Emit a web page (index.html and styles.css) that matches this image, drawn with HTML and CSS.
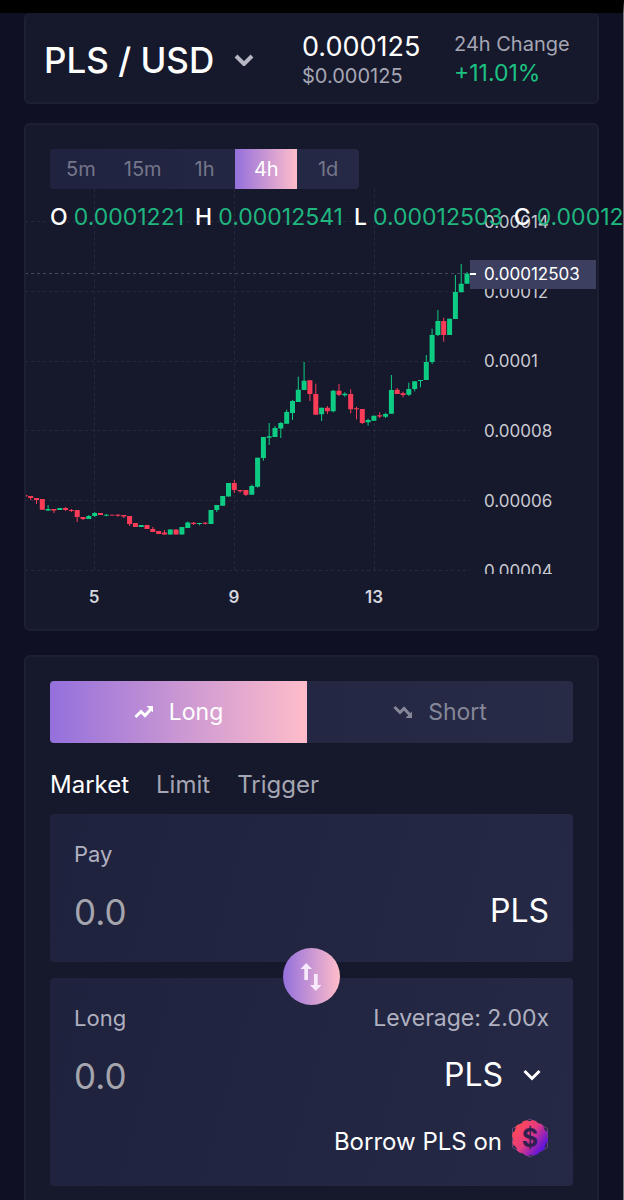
FILE: index.html
```html
<!DOCTYPE html>
<html lang="en">
<head>
<meta charset="utf-8">
<meta name="viewport" content="width=device-width, initial-scale=1">
<title>PLS / USD</title>
<link rel="stylesheet" href="styles.css">
</head>
<body>
<div class="app">
  <header class="card ticker">
    <button class="pair" type="button">
      <span>PLS / USD</span>
      <svg class="pair-caret" viewBox="0 0 20 12" aria-hidden="true"><path d="M2 2l8 8 8-8"/></svg>
    </button>
    <div class="quote">
      <div class="quote-main">0.000125</div>
      <div class="quote-sub">$0.000125</div>
    </div>
    <div class="change">
      <div class="change-label">24h Change</div>
      <div class="change-value">+11.01%</div>
    </div>
  </header>

  <main class="content">
    <section class="card chart-card">
      <div class="intervals">
        <button type="button">5m</button>
        <button type="button">15m</button>
        <button type="button">1h</button>
        <button type="button" class="active">4h</button>
        <button type="button">1d</button>
      </div>
      <div class="chart-wrap">
        <svg class="chart" viewBox="26 189 571 440" role="img" aria-label="PLS price chart">
          <defs><clipPath id="plot"><rect x="25" y="187" width="573" height="387"/></clipPath></defs>
          <g class="grid">
            <path d="M94.5 189V571M234.5 189V571M374.5 189V571"/>
            <path d="M25 221.5H470M25 291.5H470M25 361.5H470M25 430.5H470M25 500.5H470M25 570.5H470"/>
          </g>
          <path class="price-line" d="M25 273.5H470"/>
          <g id="candles"></g>
          <g class="y-labels" clip-path="url(#plot)">
            <text x="484" y="228">0.00014</text>
            <text x="484" y="298">0.00012</text>
            <text x="484" y="367">0.0001</text>
            <text x="484" y="437">0.00008</text>
            <text x="484" y="507">0.00006</text>
            <text x="484" y="577">0.00004</text>
          </g>
          <rect class="tag" x="470" y="260" width="126" height="29"/>
          <path class="tag-tick" d="M470 274H476"/>
          <text class="tag-text" x="484" y="280">0.00012503</text>
          <g class="x-labels">
            <text x="94" y="603">5</text>
            <text x="234" y="603">9</text>
            <text x="374" y="603">13</text>
          </g>
        </svg>
        <div class="legend">
          <span>O <b>0.0001221</b></span>
          <span>H <b>0.00012541</b></span>
          <span>L <b>0.00012503</b></span>
          <span>C <b>0.00012503</b></span>
        </div>
      </div>
    </section>

    <section class="card trade">
      <div class="sides">
        <button type="button" class="active">
          <svg viewBox="0 0 20 14" aria-hidden="true"><path class="stroke" d="M1.5 12l5.5-5.5 4 4L17 4"/><path class="head" d="M12.5 1H19v6.5z"/></svg>
          <span>Long</span>
        </button>
        <button type="button">
          <svg viewBox="0 0 20 14" aria-hidden="true"><path class="stroke" d="M1.5 2l5.5 5.5 4-4L17 10"/><path class="head" d="M12.5 13H19V6.5z"/></svg>
          <span>Short</span>
        </button>
      </div>
      <div class="order-types">
        <button type="button" class="active">Market</button>
        <button type="button">Limit</button>
        <button type="button">Trigger</button>
      </div>
      <div class="box pay">
        <label class="muted" for="pay">Pay</label>
        <div class="row">
          <input id="pay" type="text" inputmode="decimal" placeholder="0.0">
          <span class="token">PLS</span>
        </div>
        <button class="swap" type="button" aria-label="Swap">
          <svg viewBox="0 0 22 28" aria-hidden="true"><path d="M6.2 0L12 6H8v11H4.3V6H.5zM15.8 28L10 22h4V11h3.7v11h3.8z"/></svg>
        </button>
      </div>
      <div class="box long">
        <div class="row">
          <label class="muted" for="long">Long</label>
          <span class="muted leverage">Leverage: 2.00x</span>
        </div>
        <div class="row">
          <input id="long" type="text" inputmode="decimal" placeholder="0.0">
          <button class="token token-select" type="button">
            <span>PLS</span>
            <svg viewBox="0 0 18 12" aria-hidden="true"><path d="M1.5 2l7.5 7.5L16.5 2"/></svg>
          </button>
        </div>
        <a class="borrow" href="#">
          <span>Borrow PLS on</span>
          <svg viewBox="0 0 38 40" aria-hidden="true">
            <defs><linearGradient id="coin" x1="0.1" y1="0.2" x2="0.9" y2="0.8"><stop offset="0" stop-color="#ff4858"/><stop offset="0.45" stop-color="#e43a80"/><stop offset="1" stop-color="#5a12e0"/></linearGradient></defs>
            <path class="hex" d="M19 1L36.500 10.500V29.500L19 39 1.500 29.500V10.500z"/>
            <circle cx="19" cy="20" r="17" fill="url(#coin)"/>
            <circle class="scallop" cx="19" cy="20" r="17" stroke="url(#coin)"/>
            <text x="19" y="28.5">$</text>
          </svg>
        </a>
      </div>
    </section>
  </main>
</div>
<script src="chart.js"></script>
</body>
</html>
```

FILE: styles.css
```css
* { box-sizing: border-box; }

body {
  margin: 0;
  background: #0f1023;
  color: #fff;
  font-family: Inter, "Liberation Sans", sans-serif;
  font-size: 22px;
}

button, input {
  font: inherit;
  color: inherit;
  background: none;
  border: 0;
  padding: 0;
}

button { cursor: pointer; }

.app {
  display: flex;
  flex-direction: column;
  min-height: 100vh;
  padding: 0 24px;
  border-top: 13px solid #000;
  border-right: 1px solid #77787f;
  overflow: hidden;
}

.card {
  background: #16182c;
  border: 2px solid #1d1f33;
  border-radius: 6px;
}

.ticker {
  display: flex;
  align-items: flex-start;
  height: 91px;
  border-top: 0;
  padding: 18px 18px 0;
}

.pair {
  display: flex;
  align-items: center;
  gap: 20px;
  width: 258px;
  font-size: 35px;
  font-weight: 500;
  line-height: 58px;
  white-space: nowrap;
}

.pair-caret {
  width: 20px;
  height: 12px;
  fill: none;
  stroke: #b5b6c1;
  stroke-width: 4;
}

.quote { width: 152px; }
.quote-main { font-size: 27px; line-height: 32px; }
.quote-sub { font-size: 20px; line-height: 26px; color: #a5a6b3; }
.change-label { font-size: 20px; line-height: 26px; color: #a5a6b3; white-space: nowrap; }
.change-value { font-size: 23px; line-height: 32px; color: #1cc282; }

.content {
  display: flex;
  flex: 1;
  flex-direction: column;
  gap: 24px;
  margin-top: 19px;
}

.chart-card { padding-top: 24px; }

.intervals {
  display: grid;
  grid-template-columns: repeat(5, 1fr);
  width: 309px;
  margin-left: 24px;
  overflow: hidden;
  border-radius: 4px;
  background: linear-gradient(90deg, #20233f, #262945);
  font-size: 20px;
  line-height: 40px;
  color: #74768a;
}

.intervals .active { color: #fff; }

.intervals .active, .sides .active, .swap {
  background: linear-gradient(90deg, #9470dc, #ffbdca);
}

.chart-wrap { position: relative; }

.chart {
  display: block;
  width: 100%;
  height: auto;
  font-size: 17px;
}

.grid, .price-line { fill: none; stroke: #26283b; stroke-dasharray: 3 3; }
.price-line { stroke: #444766; }
.up { stroke: #0ecc83; }
.down { stroke: #fa3c58; }
.body { stroke-width: 5; }
.y-labels { fill: #c9cad1; }
.tag { fill: #3c3f60; }
.tag-tick { stroke: #fff; stroke-width: 2; }
.tag-text { fill: #fff; }
.x-labels { fill: #d5d6dd; font-weight: 600; text-anchor: middle; }

.legend {
  position: absolute;
  top: 12px;
  left: 24px;
  display: flex;
  gap: 11px;
  font-size: 23px;
  line-height: 32px;
  font-weight: 500;
  white-space: nowrap;
}

.legend b { font-weight: 400; color: #1fb67f; }

.trade {
  flex: 1;
  padding: 24px 24px 14px;
  border-bottom: 0;
  border-radius: 6px 6px 0 0;
}

.sides {
  display: grid;
  grid-template-columns: 257fr 266fr;
  height: 62px;
  overflow: hidden;
  border-radius: 4px;
  background: linear-gradient(90deg, #20233f, #282b46);
}

.sides button {
  display: flex;
  align-items: center;
  justify-content: center;
  gap: 15px;
  font-size: 23px;
  color: #858799;
}

.sides .active { color: #fff; }
.sides svg { width: 20px; height: 14px; }
.stroke { fill: none; stroke: currentColor; stroke-width: 3; }
.head { fill: currentColor; }

.order-types {
  display: flex;
  gap: 27px;
  padding: 26px 0 13px;
  font-size: 24px;
  line-height: 32px;
  color: #a5a6b3;
}

.order-types .active { color: #fff; }

.box {
  padding: 24px;
  border-radius: 4px;
  background: linear-gradient(105deg, #1f223d, #262945);
}

.pay { position: relative; height: 148px; }
.long { height: 208px; margin-top: 16px; }

.muted { display: block; line-height: 32px; color: #b0b1c0; }
.leverage { font-size: 23px; }

.row {
  display: flex;
  align-items: center;
  justify-content: space-between;
}

.row input {
  flex: 1;
  min-width: 0;
  height: 48px;
  margin-top: 18px;
  font-size: 35px;
  outline: 0;
}

.row input::placeholder { color: #a4a5ad; opacity: 1; }

.token { margin-top: 16px; font-size: 32px; line-height: 48px; }

.token-select {
  display: flex;
  align-items: center;
  gap: 20px;
  padding-right: 8px;
}

.token-select svg {
  width: 18px;
  height: 12px;
  fill: none;
  stroke: #fff;
  stroke-width: 3;
}

.swap {
  position: absolute;
  top: 134px;
  left: calc(50% - 29px);
  display: grid;
  place-items: center;
  width: 57px;
  height: 57px;
  border-radius: 50%;
}

.swap svg { width: 22px; height: 28px; fill: #f6e9fb; }

.borrow {
  display: flex;
  align-items: flex-end;
  justify-content: flex-end;
  gap: 9px;
  margin-top: 18px;
  font-size: 24px;
  line-height: 32px;
  color: #fff;
  text-decoration: none;
}

.borrow svg { width: 38px; height: 40px; }
.hex { fill: none; stroke: #6b4680; }
.scallop { fill: none; stroke-width: 2; stroke-dasharray: 5 4; }
.borrow text { fill: #30204f; font-size: 25px; font-weight: 700; text-anchor: middle; }
```

FILE: chart.js
```js
// Each candle: direction, body top, body bottom, wick top, wick bottom.
const candles = [
  ["d",495,496.5,495,496.5],["d",496,498,496,500],["d",498,500,498,504],["d",499,509.7,499,509.7],
  ["u",509,510.5,505,511],["d",509,510.5,509,513],["u",508,510,508,510],["d",508,510,507,511],
  ["d",510,511,509,512],["d",510,517,510,522],["d",517,519,517,520],["u",516,519,515,519],
  ["u",513,516,512,517],["d",513,515,513,515],["u",514.7,515.7,514,516.3],["d",514.7,515.5,514.7,515.5],
  ["d",514.7,515.7,514,516.7],["d",515,516.5,515,518],["d",516,524,516,526],["d",523,527,523,527],
  ["u",525,527,525,527],["d",525,529,525,529],["d",529,532,527,532],["d",531,534,531,534],
  ["d",532.5,534.5,530,534.5],["u",529.5,534.5,529.5,534.5],["d",529.5,534.5,529.5,534.5],["u",527,534.5,527,534.5],
  ["u",522.5,528,521.5,528],["d",522.7,524,522,525],["u",523,524,522.7,525.3],["d",522.7,523.7,522,524.7],
  ["u",510,524,510,524],["u",505,510,505,512],["u",496,505.7,496,505.7],["u",483,496.5,483,496.5],
  ["d",483,490,480,493],["d",490,491.3,490,492.7],["d",490,494.7,490,496],["u",486,494.7,484.7,494.7],
  ["u",457.7,486.7,457.7,487.7],["u",437,458,437,460.7],["u",436.3,437.7,423,445],["u",428,437,426,437],
  ["u",423,428.5,422,438],["u",412,423.7,409.7,423.7],["u",401,413,400,420],["u",389.7,402,376.7,402],
  ["u",380.7,390,362,390],["d",380.3,394,380.3,401],["d",394,414.7,383.7,414.7],["u",407.7,414.3,407.7,421],
  ["d",407.7,411.3,406,414],["u",390.7,411.3,390,412.3],["d",390.7,394.7,384,396],["u",393.7,395.3,392.3,396.7],
  ["d",394,409.3,389.3,413.3],["d",408.3,409.3,406.7,419.3],["d",409,423,409,424],["u",420,422.3,418.7,425.7],
  ["u",415.7,420.7,415.7,420.7],["d",415.3,416.5,412.3,418],["u",414,416.7,412.7,418],["u",390,413.7,375,413.7],
  ["d",389.7,394,388,394],["d",393.3,395,391.7,397.3],["u",389,394.7,382.7,396],["u",381.3,389,381.3,391.3],
  ["u",380,381,380,387.3],["u",362,380,355,380],["u",335,362,328.7,364],["u",321,335,310,336],
  ["d",321,335,317.7,341.7],["u",318.7,335,318.7,335],["u",292,319,275,319],["u",283.7,292.3,264,292.3],
  ["u",273.7,283.7,272,283.7]
];

const group = document.getElementById("candles");
const paths = { u: ["", ""], d: ["", ""] };

candles.forEach(([dir, top, bottom, high, low], i) => {
  const x = (24.85 + 5.818 * i).toFixed(1);
  paths[dir][0] += `M${x} ${top}V${bottom}`;
  paths[dir][1] += `M${x} ${high}V${low}`;
});

for (const dir of ["u", "d"]) {
  ["body", "wick"].forEach((part, n) => {
    const path = document.createElementNS("http://www.w3.org/2000/svg", "path");
    path.setAttribute("class", `${part} ${dir === "u" ? "up" : "down"}`);
    path.setAttribute("d", paths[dir][n]);
    group.append(path);
  });
}
```
